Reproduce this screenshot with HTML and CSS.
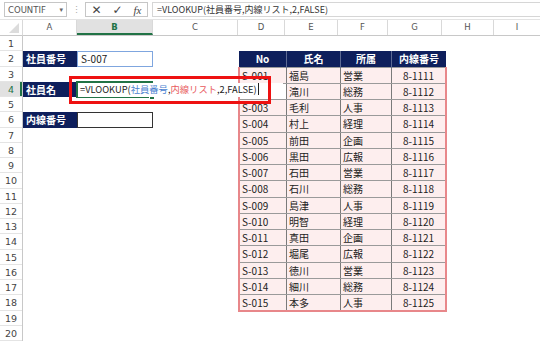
FILE: index.html
```html
<!DOCTYPE html>
<html lang="ja">
<head>
    <meta charset="UTF-8">
    <title>VLOOKUP</title>
    <link rel="stylesheet" href="styles.css">
</head>
<body>
    <div id="formula-bar">
        <div class="name-box">COUNTIF<span class="caret">▾</span></div>
        <div class="grip">⋮</div>
        <div class="fx-buttons">
            <span class="btn-x">✕</span>
            <span class="btn-ok">✓</span>
            <span class="btn-fx">fx</span>
        </div>
        <div class="formula-input">=VLOOKUP(社員番号,内線リスト,2,FALSE)</div>
    </div>

    <div id="sheet">
        <div class="corner"></div>
        <div class="col-heads">
            <div class="ch ch-a">A</div>
            <div class="ch ch-b active">B</div>
            <div class="ch ch-c">C</div>
            <div class="ch ch-d">D</div>
            <div class="ch ch-e">E</div>
            <div class="ch ch-f">F</div>
            <div class="ch ch-g">G</div>
            <div class="ch ch-h">H</div>
            <div class="ch ch-i">I</div>
        </div>
        <div class="row-heads">
            <div class="rh">1</div>
            <div class="rh">2</div>
            <div class="rh">3</div>
            <div class="rh active">4</div>
            <div class="rh">5</div>
            <div class="rh">6</div>
            <div class="rh">7</div>
            <div class="rh">8</div>
            <div class="rh">9</div>
            <div class="rh">10</div>
            <div class="rh">11</div>
            <div class="rh">12</div>
            <div class="rh">13</div>
            <div class="rh">14</div>
            <div class="rh">15</div>
            <div class="rh">16</div>
            <div class="rh">17</div>
            <div class="rh">18</div>
            <div class="rh">19</div>
            <div class="rh">20</div>
        </div>

        <div class="cells">
            <div class="label a2">社員番号</div>
            <div class="input b2">S-007</div>
            <div class="label a4">社員名</div>
            <div class="label a6">内線番号</div>
            <div class="input b6"></div>

            <table class="ext-list">
                <thead>
                    <tr><th>No</th><th>氏名</th><th>所属</th><th>内線番号</th></tr>
                </thead>
                <tbody>
                    <tr><td>S-001</td><td>福島</td><td>営業</td><td class="num">8-1111</td></tr>
                    <tr><td class="covered">S-002</td><td>滝川</td><td>総務</td><td class="num">8-1112</td></tr>
                    <tr><td>S-003</td><td>毛利</td><td>人事</td><td class="num">8-1113</td></tr>
                    <tr><td>S-004</td><td>村上</td><td>経理</td><td class="num">8-1114</td></tr>
                    <tr><td>S-005</td><td>前田</td><td>企画</td><td class="num">8-1115</td></tr>
                    <tr><td>S-006</td><td>黒田</td><td>広報</td><td class="num">8-1116</td></tr>
                    <tr><td>S-007</td><td>石田</td><td>営業</td><td class="num">8-1117</td></tr>
                    <tr><td>S-008</td><td>石川</td><td>総務</td><td class="num">8-1118</td></tr>
                    <tr><td>S-009</td><td>島津</td><td>人事</td><td class="num">8-1119</td></tr>
                    <tr><td>S-010</td><td>明智</td><td>経理</td><td class="num">8-1120</td></tr>
                    <tr><td>S-011</td><td>真田</td><td>企画</td><td class="num">8-1121</td></tr>
                    <tr><td>S-012</td><td>堀尾</td><td>広報</td><td class="num">8-1122</td></tr>
                    <tr><td>S-013</td><td>徳川</td><td>営業</td><td class="num">8-1123</td></tr>
                    <tr><td>S-014</td><td>細川</td><td>総務</td><td class="num">8-1124</td></tr>
                    <tr><td>S-015</td><td>本多</td><td>人事</td><td class="num">8-1125</td></tr>
                </tbody>
            </table>

            <!-- cell B4 in edit mode -->
            <div class="active-cell"><span class="fill-handle"></span></div>
            <div class="editor">=VLOOKUP(<span class="ref-blue">社員番号</span>,<span class="ref-red">内線リスト</span>,2,FALSE)<span class="cursor"></span></div>
            <div class="callout"></div>
        </div>
    </div>
</body>
</html>
```

FILE: styles.css
```css
:root {
    --navy: #0e1f5c;
    --pink: #fdeeee;
    --pink-line: #e8878a;
    --green: #217346;
    --head-line: #d9d9d9;
    --row: 15.25px;
}
body {
    margin: 0;
    background: white;
    font-family: "Noto Sans CJK JP", "Noto Sans", sans-serif;
    font-size: 10px;
    color: #222;
    width: 540px;
    height: 341px;
    overflow: hidden;
}

/* formula bar */
#formula-bar {
    height: 20px;
    display: flex;
    align-items: center;
    padding-left: 4px;
    background: #fff;
    border-bottom: 1px solid #e3e3e3;
    box-sizing: border-box;
    color: #444;
}
.name-box {
    width: 63px;
    height: 15px;
    border: 1px solid #c6c6c6;
    box-sizing: border-box;
    display: flex;
    align-items: center;
    justify-content: space-between;
    padding: 0 3px 0 3px;
    font-family: "DejaVu Sans", sans-serif;
    font-size: 8.5px;
    color: #555;
}
.caret {
    font-size: 7px;
    color: #666;
}
.grip {
    width: 18px;
    text-align: center;
    color: #aaa;
    font-size: 9px;
}
.fx-buttons {
    width: 63px;
    height: 15px;
    border: 1px solid #c6c6c6;
    box-sizing: border-box;
    display: flex;
    align-items: center;
    justify-content: space-around;
    color: #444;
}
.btn-x {
    font-size: 12px;
    font-family: "DejaVu Sans", sans-serif;
}
.btn-ok {
    font-size: 12px;
    font-family: "DejaVu Sans", sans-serif;
}
.btn-fx {
    font-family: "Liberation Serif", serif;
    font-style: italic;
    font-size: 11px;
}
.formula-input {
    flex: 1;
    margin-left: 4px;
    height: 15px;
    border: 1px solid #d6d6d6;
    border-right: 0;
    box-sizing: border-box;
    padding-left: 4px;
    font-size: 9px;
    line-height: 13px;
    color: #333;
}

/* sheet */
#sheet {
    display: grid;
    grid-template-columns: 23px 1fr;
    grid-template-rows: 16px 1fr;
}
.corner {
    border-right: 1px solid var(--head-line);
    border-bottom: 1px solid #c8c8c8;
    position: relative;
}
.corner::after {
    content: "";
    position: absolute;
    right: 3px;
    bottom: 2px;
    border-left: 10px solid transparent;
    border-bottom: 10px solid #dcdcdc;
}
.col-heads {
    display: flex;
    border-bottom: 1px solid #c8c8c8;
}
.ch {
    box-sizing: border-box;
    border-right: 1px solid var(--head-line);
    text-align: center;
    line-height: 15px;
    color: #555;
    font-family: "DejaVu Sans", sans-serif;
    font-size: 8.5px;
}
.ch.active {
    background: #e1e1e1;
    color: var(--green);
    font-weight: bold;
    border-bottom: 2px solid var(--green);
}
.ch-a { width: 54px; }
.ch-b { width: 76px; }
.ch-c { width: 85px; }
.ch-d { width: 47px; }
.ch-e { width: 53px; }
.ch-f { width: 50px; }
.ch-g { width: 54px; }
.ch-h { width: 52px; }
.ch-i { flex: 1; border-right: 0; }

.row-heads {
    display: flex;
    flex-direction: column;
    border-right: 1px solid #c8c8c8;
}
.rh {
    height: var(--row);
    box-sizing: border-box;
    border-bottom: 1px solid #e4e4e4;
    text-align: center;
    line-height: 15px;
    font-size: 9.5px;
    color: #444;
    font-family: "DejaVu Sans", sans-serif;
}
.rh.active {
    background: #e1e1e1;
    color: var(--green);
    box-shadow: inset -2px 0 0 var(--green);
}

.cells {
    position: relative;
    display: grid;
    grid-template-columns: 54px 76px 85px 47px 53px 50px 54px 52px 1fr;
    grid-template-rows: repeat(20, var(--row));
}
.label {
    background: var(--navy);
    color: white;
    font-weight: bold;
    padding-left: 3px;
    line-height: 15px;
    grid-column: 1;
}
.a2 { grid-row: 2; }
.a4 { grid-row: 4; }
.a6 { grid-row: 6; }
.input {
    grid-column: 2;
    box-sizing: border-box;
    padding-left: 3px;
    line-height: 13px;
    background: white;
}
.b2 {
    grid-row: 2;
    border: 1px solid #7fa6df;
}
.b6 {
    grid-row: 6;
    border: 1px solid #333;
}

/* 内線リスト */
.ext-list {
    grid-column: 4 / 8;
    grid-row: 2 / 18;
    border-collapse: collapse;
    table-layout: fixed;
    width: 204px;
    height: calc(var(--row) * 16);
}
.ext-list th {
    background: var(--navy);
    color: white;
    font-weight: bold;
    border-right: 1px solid #5d6a94;
    height: var(--row);
    padding: 0;
}
.ext-list th:last-child {
    border-right: 0;
}
.ext-list th:nth-child(1) { width: 47px; }
.ext-list th:nth-child(2) { width: 53px; }
.ext-list th:nth-child(3) { width: 50px; }
.ext-list th:nth-child(4) { width: 54px; }
.ext-list td {
    background: var(--pink);
    border: 1px solid #7a7a7a;
    border-top-color: #9a9a9a;
    border-bottom-color: #9a9a9a;
    padding: 0 0 0 2px;
    height: var(--row);
    line-height: 13px;
    white-space: nowrap;
}
.ext-list td:first-child {
    border-left: 2px solid var(--pink-line);
}
.ext-list td:last-child {
    border-right: 2px solid var(--pink-line);
}
.ext-list tr:last-child td {
    border-bottom: 2px solid var(--pink-line);
}
.ext-list td.num {
    text-align: center;
    padding: 0;
}
/* hidden under the in-cell editor */
.ext-list td.covered {
    visibility: hidden;
}

/* edit mode overlays */
.active-cell {
    position: absolute;
    left: 53px;
    top: calc(var(--row) * 3 - 1px);
    width: 77px;
    height: 17px;
    box-sizing: border-box;
    border: 2px solid var(--green);
}
.fill-handle {
    position: absolute;
    right: -4px;
    bottom: -4px;
    width: 4px;
    height: 4px;
    background: var(--green);
    border: 1px solid white;
}
.editor {
    position: absolute;
    left: 55px;
    top: calc(var(--row) * 3 + 1px);
    width: 205px;
    height: 14px;
    background: white;
    padding-left: 2px;
    box-sizing: border-box;
    line-height: 13px;
    white-space: nowrap;
    font-size: 9.3px;
    color: #222;
}
.ref-blue { color: #4a7fd0; }
.ref-red { color: #e8595c; }
.cursor {
    display: inline-block;
    width: 1px;
    height: 12px;
    background: #222;
    vertical-align: -2px;
    margin-left: 1px;
}
.callout {
    position: absolute;
    left: 46px;
    top: calc(var(--row) * 3 - 6px);
    width: 202px;
    height: 28px;
    box-sizing: border-box;
    border: 3px solid #ee1111;
}
```
